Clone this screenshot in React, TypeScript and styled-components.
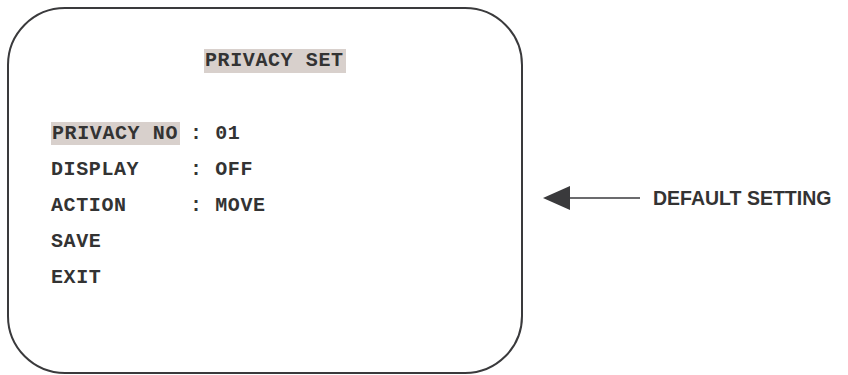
import { createGlobalStyle, styled } from 'styled-components';

const GlobalStyle = createGlobalStyle`
  html, body {
    margin: 0;
    padding: 0;
    background: #ffffff;
  }
`;

const Page = styled.div`
  display: flex;
  align-items: flex-start;
  padding: 7px 0 0 7px;
  width: 848px;
  height: 375px;
  box-sizing: border-box;
`;

const Screen = styled.div`
  width: 516px;
  height: 367px;
  box-sizing: border-box;
  border: 2px solid #3a3a3c;
  border-radius: 58px;
  padding: 40px 0 0 42px;
  font-family: 'Liberation Mono', 'Courier New', monospace;
  font-weight: bold;
  font-size: 20px;
  letter-spacing: 0.6px;
  color: #333333;
`;

const TitleRow = styled.div`
  padding-left: 153px;
  height: 24px;
  margin-bottom: 42px;
`;

const Highlight = styled.span<{ $h: number }>`
  display: inline-block;
  background: #d8d0cc;
  padding: 0 2px 0 1px;
  height: ${(p) => p.$h}px;
  line-height: ${(p) => p.$h}px;
  white-space: pre;
`;

const Menu = styled.div`
  display: flex;
  flex-direction: column;
`;

const Row = styled.div`
  display: flex;
  align-items: center;
  height: 36px;
  white-space: pre;
`;

const Label = styled.div`
  width: 139px;
  display: flex;
  align-items: center;
`;

const Value = styled.span`
  white-space: pre;
`;

const Pointer = styled.div`
  display: flex;
  align-items: center;
  margin-left: 20px;
  margin-top: 178px;
  height: 26px;
`;

const Note = styled.span`
  margin-left: 13px;
  font-family: 'Liberation Sans', Arial, sans-serif;
  font-weight: bold;
  font-size: 19.5px;
  color: #333333;
  white-space: nowrap;
`;

const items = [
  { label: 'PRIVACY NO', value: '01', active: true },
  { label: 'DISPLAY', value: 'OFF' },
  { label: 'ACTION', value: 'MOVE' },
  { label: 'SAVE' },
  { label: 'EXIT' },
];

export default function App() {
  return (
    <>
      <GlobalStyle />
      <Page>
        <Screen>
          <TitleRow>
            <Highlight $h={24}>PRIVACY SET</Highlight>
          </TitleRow>
          <Menu>
            {items.map((it) => (
              <Row key={it.label}>
                <Label>
                  {it.active ? <Highlight $h={23}>{it.label}</Highlight> : it.label}
                </Label>
                {it.value && <Value>{`: ${it.value}`}</Value>}
              </Row>
            ))}
          </Menu>
        </Screen>
        <Pointer>
          <svg width="97" height="26" viewBox="0 0 97 26">
            <polygon points="0,13 27,1 27,25" fill="#3a3a3c" />
            <line x1="26" y1="13" x2="97" y2="13" stroke="#3a3a3c" strokeWidth="1.5" />
          </svg>
          <Note>DEFAULT SETTING</Note>
        </Pointer>
      </Page>
    </>
  );
}
